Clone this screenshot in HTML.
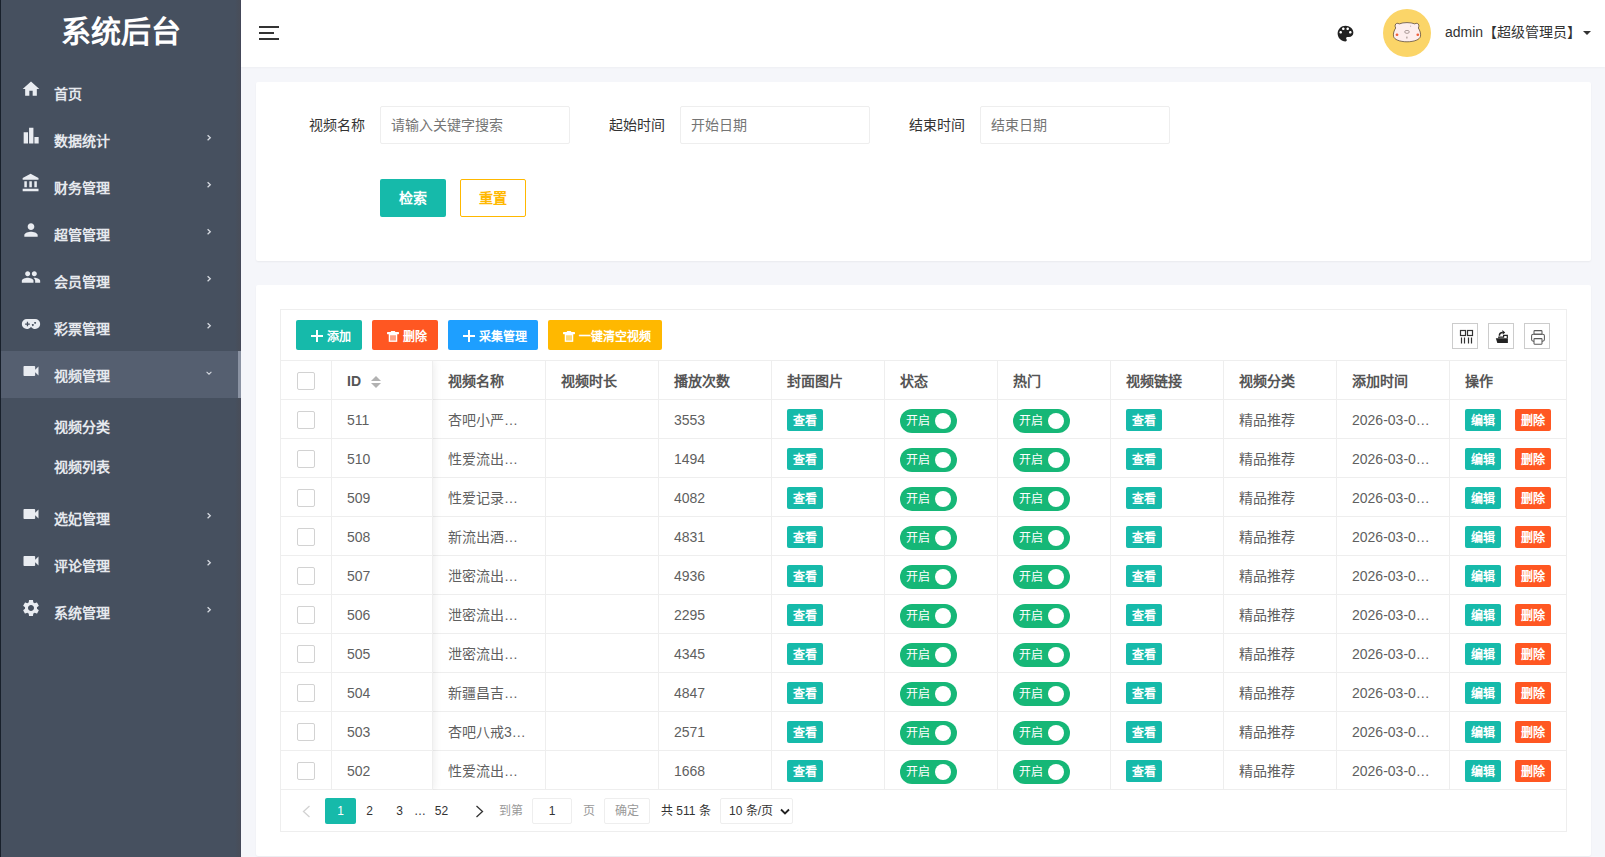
<!DOCTYPE html>
<html lang="zh-CN">
<head>
<meta charset="utf-8">
<title>系统后台</title>
<style>
*{box-sizing:border-box;margin:0;padding:0}
html,body{width:1605px;height:857px;overflow:hidden}
body{position:relative;background:#f5f6fa;font-family:"Liberation Sans",sans-serif;font-size:14px;color:#333;line-height:1}
ul{list-style:none}
svg{display:block}
.abs{position:absolute}

/* ---------- sidebar ---------- */
.side{position:absolute;left:0;top:0;width:241px;height:857px;background:#46505f linear-gradient(to right,#46505f 0,#46505f 234px,#474e5b 237px,#4a4e59 240px);border-left:1px solid #18202b;border-right:1px solid #45495a;color:#e6e9ee}
.logo{position:absolute;left:0;top:0;width:240px;height:67px;line-height:63px;text-align:center;font-size:30px;font-weight:bold;color:#fff;letter-spacing:0}
.nav{position:absolute;left:0;top:69px;width:240px}
.nav li.item{position:relative;height:47px;font-weight:bold;font-size:14px}
.nav li.item .ic{position:absolute;left:20px;top:10px;width:20px;height:20px;fill:#e9ecf1}
.nav li.item .tx{position:absolute;left:53px;top:0;line-height:50px;white-space:nowrap}
.nav li.item .ar{position:absolute;left:204px;top:17px;width:8px;height:10px;fill:none;stroke:#d5d9e0;stroke-width:1.3}
.nav li.on{background:#555f70}
.nav li.on:after{content:"";position:absolute;right:0;top:0;width:3px;height:47px;background:#8b93a3}
.nav .sub{padding:8px 0;height:96px}
.nav .sub li{height:40px;line-height:42px;padding-left:53px;font-weight:bold;font-size:14px;white-space:nowrap}

/* ---------- header ---------- */
.header{position:absolute;left:241px;top:0;width:1364px;height:67px;background:#fff;box-shadow:0 1px 2px rgba(0,0,0,.03)}
.burger i{position:absolute;left:18px;height:2px;background:#333;display:block}
.uname{position:absolute;left:1204px;top:0;line-height:65px;font-size:14px;color:#333;white-space:nowrap}
.caret{position:absolute;left:1342px;top:31px;width:0;height:0;border-left:4px solid transparent;border-right:4px solid transparent;border-top:4.5px solid #333}
.avatar{position:absolute;left:1142px;top:9px;width:48px;height:48px;border-radius:50%;background:#fbd568;overflow:hidden}

/* ---------- cards ---------- */
.card{position:absolute;left:256px;width:1335px;background:#fff;border-radius:2px;box-shadow:0 1px 2px 0 rgba(0,0,0,.05)}

/* ---------- search form ---------- */
.search{top:82px;height:179px}
.search label{position:absolute;top:24px;height:38px;line-height:38px;width:80px;text-align:right;font-size:14px;color:#333;white-space:nowrap}
.search .inp{position:absolute;top:24px;width:190px;height:38px;border:1px solid #eee;border-radius:2px;background:#fff;line-height:36px;padding:0 0 0 10px;font-size:14px;color:#333;font-family:"Liberation Sans",sans-serif;outline:none;display:block}
.search .inp::placeholder{color:#757575;opacity:1}
.btn{position:absolute;display:block;border:none;padding:0;margin:0;border-radius:2px;color:#fff;text-align:center;font-weight:bold;white-space:nowrap;font-family:"Liberation Sans",sans-serif}
.search .btn{top:97px;width:66px;height:38px;line-height:39px;font-size:14px}
.bg-pri{background:#16baaa}
.bg-red{background:#ff5722}
.bg-blue{background:#1e9fff}
.bg-warm{background:#ffb800}

/* ---------- table card ---------- */
.tcard{top:285px;height:571px}
.tbox{position:absolute;left:24px;top:24px;width:1287px;height:523px;border:1px solid #eee;background:#fff}
.tool{position:absolute;left:0;top:0;width:1285px;height:51px;border-bottom:1px solid #eee}
.tool .btn{top:10px;height:30px;line-height:34px;font-size:12px;text-align:left}
.tool .btn svg{position:absolute;top:10px}
.tool .btn span{position:absolute;top:0}
.tico{position:absolute;top:13px;width:26px;height:26px;border:1px solid #ccc;background:#fff}
.tico svg{position:absolute;left:0;top:0}
table.grid{position:absolute;left:0;top:51px;border-collapse:separate;border-spacing:0;table-layout:fixed;width:1285px;color:#5f5f5f;font-size:14px}
table.grid th,table.grid td{height:39px;border-right:1px solid #eee;border-bottom:1px solid #eee;padding:2px 15px 0;text-align:left;white-space:nowrap;overflow:hidden;vertical-align:middle;line-height:36px}
table.grid th{font-weight:bold;color:#555}
table.grid th:last-child,table.grid td:last-child{border-right:none}
table.grid .ck{padding:0}
.cb{display:block;width:18px;height:18px;border:1px solid #d2d2d2;border-radius:2px;background:#fff;margin:0 0 0 16px;position:relative;top:1px}
.xs{display:inline-block;vertical-align:middle;width:36px;height:22px;line-height:25px;overflow:hidden;border-radius:2px;color:#fff;font-size:12px;font-weight:bold;text-align:center;position:relative;top:-1px}
.sw{display:inline-block;vertical-align:middle;position:relative;top:0;width:57px;height:24px;border-radius:12px;background:#16b777;color:#fff;font-size:12px;line-height:24px;padding-left:6px}
.sw i{position:absolute;left:35px;top:4px;width:16px;height:16px;border-radius:50%;background:#fff}
.clip{position:absolute;left:0;top:51px;width:1285px;height:429px;overflow:hidden;pointer-events:none}
.fixl{position:absolute;left:0;top:0;width:152px;height:429px;box-shadow:1px 0 8px rgba(0,0,0,.08);pointer-events:none}
.fixr{position:absolute;left:1169px;top:0;width:116px;height:429px;box-shadow:none;pointer-events:none}
.sort{display:inline-block;position:relative;width:10px;height:14px;margin-left:10px;vertical-align:middle;top:0}
.sort:before,.sort:after{content:"";position:absolute;left:0;border-left:5px solid transparent;border-right:5px solid transparent}
.sort:before{top:1px;border-bottom:5px solid #b2b2b2}
.sort:after{top:8px;border-top:5px solid #b2b2b2}
/* pagination */
.page{position:absolute;left:0;top:480px;width:1285px;height:41px;font-size:12px;color:#333}
.page>*{position:absolute;top:8px;height:26px;line-height:26px;white-space:nowrap}
.page .cur{background:#16baaa;color:#fff;border-radius:2px;width:31px;text-align:center}
.page .num{text-align:center;width:31px}
.page .bx{border:1px solid #eee;border-radius:2px;background:#fff;line-height:24px;text-align:center}
</style>
</head>
<body>

<!-- ================= SIDEBAR ================= -->
<div class="side">
  <div class="logo">系统后台</div>
  <ul class="nav">
    <li class="item">
      <svg class="ic" viewBox="0 0 24 24"><path d="M10 20v-6h4v6h5v-8h3L12 3 2 12h3v8z"/></svg>
      <span class="tx">首页</span>
    </li>
    <li class="item">
      <svg class="ic" viewBox="0 0 24 24"><path d="M3.2 7.6h5.2V21H3.2zM9.7 2.2h5.2V21H9.7zM16.1 13.1h5.1V21h-5.1z"/></svg>
      <span class="tx">数据统计</span>
      <svg class="ar" viewBox="0 0 8 10"><path d="M2.6 2.3 5.3 4.800 2.6 7.300"/></svg>
    </li>
    <li class="item">
      <svg class="ic" viewBox="0 0 24 24"><path d="M4 10v7h3v-7H4zm6 0v7h3v-7h-3zM2 22h19v-3H2v3zm14-12v7h3v-7h-3zm-4.500-9L2 6v2h19V6l-9.500-5z"/></svg>
      <span class="tx">财务管理</span>
      <svg class="ar" viewBox="0 0 8 10"><path d="M2.6 2.3 5.3 4.800 2.6 7.300"/></svg>
    </li>
    <li class="item">
      <svg class="ic" viewBox="0 0 24 24"><path d="M12 12c2.210 0 4-1.790 4-4s-1.790-4-4-4-4 1.790-4 4 1.790 4 4 4zm0 2c-2.670 0-8 1.340-8 4v2h16v-2c0-2.660-5.330-4-8-4z"/></svg>
      <span class="tx">超管管理</span>
      <svg class="ar" viewBox="0 0 8 10"><path d="M2.6 2.3 5.3 4.800 2.6 7.300"/></svg>
    </li>
    <li class="item">
      <svg class="ic" viewBox="0 0 24 24"><path d="M16 11c1.660 0 2.990-1.340 2.990-3S17.660 5 16 5c-1.660 0-3 1.340-3 3s1.340 3 3 3zm-8 0c1.660 0 2.990-1.340 2.990-3S9.660 5 8 5C6.340 5 5 6.340 5 8s1.340 3 3 3zm0 2c-2.330 0-7 1.170-7 3.500V19h14v-2.500c0-2.330-4.670-3.500-7-3.500zm8 0c-.290 0-.620.020-.970.050 1.160.840 1.970 1.970 1.970 3.450V19h6v-2.500c0-2.330-4.670-3.500-7-3.500z"/></svg>
      <span class="tx">会员管理</span>
      <svg class="ar" viewBox="0 0 8 10"><path d="M2.6 2.3 5.3 4.800 2.6 7.300"/></svg>
    </li>
    <li class="item">
      <svg class="ic" viewBox="0 0 24 24"><path fill-rule="evenodd" d="M7 6h10a6 6 0 0 1 0 12c-1.900 0-3.500-.850-4.600-2.200L12 15.300l-.4.500C10.500 17.150 8.900 18 7 18A6 6 0 0 1 7 6zm0 3.200v2.050H4.950v1.500H7v2.050h1.500v-2.050h2.050v-1.500H8.500V9.200H7zm9.900.300a1.150 1.150 0 1 0 .01 0zm-2.700 2.600a1.150 1.150 0 1 0 .01 0z"/></svg>
      <span class="tx">彩票管理</span>
      <svg class="ar" viewBox="0 0 8 10"><path d="M2.6 2.3 5.3 4.800 2.6 7.300"/></svg>
    </li>
    <li class="item on">
      <svg class="ic" viewBox="0 0 24 24"><path d="M17 10.500V7c0-.550-.450-1-1-1H4c-.550 0-1 .450-1 1v10c0 .550.450 1 1 1h12c.550 0 1-.450 1-1v-3.500l4 4v-11l-4 4z"/></svg>
      <span class="tx">视频管理</span>
      <svg class="ar" viewBox="0 0 8 10" style="left:203px;top:18px;width:10px;height:8px"><path d="M2 3.500 5 6.500 8 3.500" transform="translate(-1 0)"/></svg>
    </li>
    <li class="sub">
      <ul>
        <li>视频分类</li>
        <li>视频列表</li>
      </ul>
    </li>
    <li class="item">
      <svg class="ic" viewBox="0 0 24 24"><path d="M17 10.500V7c0-.550-.450-1-1-1H4c-.550 0-1 .450-1 1v10c0 .550.450 1 1 1h12c.550 0 1-.450 1-1v-3.500l4 4v-11l-4 4z"/></svg>
      <span class="tx">选妃管理</span>
      <svg class="ar" viewBox="0 0 8 10"><path d="M2.6 2.3 5.3 4.800 2.6 7.300"/></svg>
    </li>
    <li class="item">
      <svg class="ic" viewBox="0 0 24 24"><path d="M17 10.500V7c0-.550-.450-1-1-1H4c-.550 0-1 .450-1 1v10c0 .550.450 1 1 1h12c.550 0 1-.450 1-1v-3.500l4 4v-11l-4 4z"/></svg>
      <span class="tx">评论管理</span>
      <svg class="ar" viewBox="0 0 8 10"><path d="M2.6 2.3 5.3 4.800 2.6 7.300"/></svg>
    </li>
    <li class="item">
      <svg class="ic" viewBox="0 0 24 24"><path d="M19.140 12.940c.040-.300.060-.610.060-.940 0-.320-.020-.640-.070-.940l2.030-1.580c.180-.140.230-.410.120-.610l-1.920-3.320c-.120-.220-.370-.290-.590-.220l-2.390.960c-.500-.380-1.030-.700-1.620-.940l-.360-2.540c-.040-.240-.240-.410-.480-.410h-3.840c-.240 0-.430.170-.470.410l-.360 2.540c-.590.240-1.130.570-1.620.940l-2.390-.960c-.220-.080-.470 0-.590.220L2.740 8.870c-.120.210-.080.470.120.610l2.030 1.580c-.050.300-.090.630-.090.940s.020.640.070.940l-2.030 1.580c-.180.140-.230.410-.120.610l1.920 3.320c.120.220.370.290.590.220l2.390-.960c.500.380 1.030.700 1.620.940l.360 2.540c.050.240.240.410.480.410h3.840c.240 0 .440-.170.470-.410l.360-2.540c.590-.240 1.130-.560 1.620-.940l2.390.960c.220.080.470 0 .590-.220l1.920-3.320c.120-.220.070-.470-.120-.610l-2.010-1.580zM12 15.600c-1.980 0-3.600-1.620-3.600-3.600s1.620-3.600 3.600-3.600 3.600 1.620 3.600 3.600-1.620 3.600-3.600 3.600z"/></svg>
      <span class="tx">系统管理</span>
      <svg class="ar" viewBox="0 0 8 10"><path d="M2.6 2.3 5.3 4.800 2.6 7.300"/></svg>
    </li>
  </ul>
</div>

<!-- ================= HEADER ================= -->
<div class="header">
  <div class="burger">
    <i style="top:26px;width:20px"></i>
    <i style="top:32px;width:15px"></i>
    <i style="top:38px;width:20px"></i>
  </div>
  <svg class="abs" style="left:1093.700px;top:22.500px;width:21px;height:21px" viewBox="0 0 24 24"><path fill="#222" d="M12 3c-4.970 0-9 4.030-9 9s4.030 9 9 9c.830 0 1.500-.670 1.500-1.500 0-.390-.150-.740-.390-1.010-.230-.260-.380-.610-.380-.990 0-.830.670-1.500 1.500-1.500H16c2.760 0 5-2.240 5-5 0-4.420-4.030-8-9-8zm-5.500 9c-.830 0-1.500-.670-1.500-1.500S5.670 9 6.500 9 8 9.670 8 10.500 7.330 12 6.500 12zm3-4C8.670 8 8 7.330 8 6.500S8.670 5 9.500 5s1.500.670 1.500 1.500S10.330 8 9.500 8zm5 0c-.830 0-1.500-.670-1.500-1.500S13.670 5 14.500 5s1.500.670 1.500 1.500S15.330 8 14.500 8zm3 4c-.830 0-1.500-.670-1.500-1.500S16.670 9 17.500 9s1.500.670 1.500 1.500-.670 1.500-1.500 1.500z"/></svg>
  <div class="avatar">
    <svg viewBox="0 0 48 48" width="48" height="48">
      <path d="M12.200 16.200c.300-1.900 2.400-2.500 4-1.300 2.200-.900 5-1.300 7.800-1.300s5.600.400 7.800 1.300c1.600-1.200 3.700-.600 4 1.300.200 1.200-.100 2.100-.500 2.800 1.700 2.400 2.600 5.600 2.200 8.200-.500 3.300-6.300 5.600-13.500 5.600S11 30.500 10.500 27.200c-.400-2.600.500-5.800 2.200-8.200-.400-.700-.700-1.600-.500-2.800z" fill="#fdeeee" stroke="#4a3a2a" stroke-width=".7"/>
      <ellipse cx="14" cy="25.800" rx="1.400" ry="1.300" fill="#f2603c"/>
      <ellipse cx="34.800" cy="25.800" rx="1.400" ry="1.300" fill="#f2603c"/>
      <ellipse cx="24" cy="22.900" rx="2.300" ry="1.500" fill="none" stroke="#7a6a66" stroke-width=".6"/>
      <path d="M23.900 27.600v1.900" stroke="#6a5a55" stroke-width=".7" fill="none"/>
      <path d="M27.600 16.600v1.200" stroke="#8a7a75" stroke-width=".5" fill="none"/>
    </svg>
  </div>
  <div class="uname">admin【超级管理员】</div>
  <div class="caret"></div>
</div>

<!-- ================= SEARCH CARD ================= -->
<div class="card search">
  <label style="left:29px">视频名称</label>
  <input class="inp" type="text" style="left:124px" placeholder="请输入关键字搜索">
  <label style="left:329px">起始时间</label>
  <input class="inp" type="text" style="left:424px" placeholder="开始日期">
  <label style="left:629px">结束时间</label>
  <input class="inp" type="text" style="left:724px" placeholder="结束日期">
  <button type="button" class="btn bg-pri" style="left:124px">检索</button>
  <button type="button" class="btn" style="left:204px;background:#fff;border:1px solid #ffb800;color:#ffb800;line-height:37px">重置</button>
</div>


<!-- ================= TABLE CARD ================= -->
<div class="card tcard">
 <div class="tbox">
  <div class="tool">
    <div class="btn bg-pri" style="left:15px;width:66px"><svg style="left:15px" width="12" height="12" viewBox="0 0 12 12"><path d="M5 0h2v5h5v2H7v5H5V7H0V5h5z" fill="#fff"/></svg><span style="left:31px">添加</span></div>
    <div class="btn bg-red" style="left:91px;width:66px"><svg style="left:15px;top:10.5px" width="12" height="11" viewBox="0 0 12 11"><rect x="0" y="1" width="12" height="2.2" rx=".6" fill="#fff"/><rect x="3.800" y="0" width="4.400" height="1.500" rx=".5" fill="#fff"/><rect x="2.400" y="3.600" width="7.200" height="6.600" fill="rgba(255,255,255,.45)" stroke="#fff" stroke-width="1.300"/></svg><span style="left:31px">删除</span></div>
    <div class="btn bg-blue" style="left:167px;width:90px"><svg style="left:15px" width="12" height="12" viewBox="0 0 12 12"><path d="M5 0h2v5h5v2H7v5H5V7H0V5h5z" fill="#fff"/></svg><span style="left:31px">采集管理</span></div>
    <div class="btn bg-warm" style="left:267px;width:114px"><svg style="left:15px;top:10.5px" width="12" height="11" viewBox="0 0 12 11"><rect x="0" y="1" width="12" height="2.2" rx=".6" fill="#fff"/><rect x="3.800" y="0" width="4.400" height="1.500" rx=".5" fill="#fff"/><rect x="2.400" y="3.600" width="7.200" height="6.600" fill="rgba(255,255,255,.45)" stroke="#fff" stroke-width="1.300"/></svg><span style="left:31px">一键清空视频</span></div>

    <div class="tico" style="left:1171px">
      <svg width="24" height="24" viewBox="0 0 24 24"><g fill="none" stroke="#333" stroke-width="1.200"><rect x="7.500" y="6.500" width="5" height="5"/><rect x="14.500" y="6.500" width="5" height="5"/><path d="M8.500 13.500v6M11.500 13.500v6M15.500 13.500v6M18.500 13.500v6"/></g></svg>
    </div>
    <div class="tico" style="left:1207px">
      <svg width="24" height="24" viewBox="0 0 24 24"><path d="M6.800 14.300H18.900V18.900H8.300z" fill="#222"/><path d="M9.800 14.300V13.200h4.800V11.400h3.700V14.300" fill="none" stroke="#222" stroke-width="1.200"/><path d="M10.400 11.800c-.1-2 1.100-3.300 3.400-3.400" fill="none" stroke="#222" stroke-width="1.500"/><path d="M13.300 6.100 16.200 8.500 13.800 10.600z" fill="#222"/></svg>
    </div>
    <div class="tico" style="left:1243px">
      <svg width="24" height="24" viewBox="0 0 24 24"><g fill="none" stroke="#5a5a5a" stroke-width="1.050"><rect x="9" y="6.600" width="8" height="3.600" rx=".8"/><rect x="6.600" y="10.200" width="12.800" height="7" rx="1.600"/><rect x="9" y="14.600" width="8" height="5.600" rx=".6" fill="#fff"/></g></svg>
    </div>
  </div>

  <table class="grid">
    <colgroup><col style="width:51px"><col style="width:101px"><col style="width:113px"><col style="width:113px"><col style="width:113px"><col style="width:113px"><col style="width:113px"><col style="width:113px"><col style="width:113px"><col style="width:113px"><col style="width:113px"><col style="width:116px"></colgroup>
    <thead>
      <tr><th class="ck"><i class="cb"></i></th><th>ID<i class="sort"></i></th><th>视频名称</th><th>视频时长</th><th>播放次数</th><th>封面图片</th><th>状态</th><th>热门</th><th>视频链接</th><th>视频分类</th><th>添加时间</th><th>操作</th></tr>
    </thead>
    <tbody>
      <tr><td class="ck"><i class="cb"></i></td><td>511</td><td>杏吧小严…</td><td></td><td>3553</td><td><span class="xs bg-pri">查看</span></td><td><span class="sw">开启<i></i></span></td><td><span class="sw">开启<i></i></span></td><td><span class="xs bg-pri">查看</span></td><td>精品推荐</td><td>2026-03-0…</td><td><span class="xs bg-pri">编辑</span><span class="xs bg-red" style="margin-left:14px">删除</span></td></tr>
      <tr><td class="ck"><i class="cb"></i></td><td>510</td><td>性爱流出…</td><td></td><td>1494</td><td><span class="xs bg-pri">查看</span></td><td><span class="sw">开启<i></i></span></td><td><span class="sw">开启<i></i></span></td><td><span class="xs bg-pri">查看</span></td><td>精品推荐</td><td>2026-03-0…</td><td><span class="xs bg-pri">编辑</span><span class="xs bg-red" style="margin-left:14px">删除</span></td></tr>
      <tr><td class="ck"><i class="cb"></i></td><td>509</td><td>性爱记录…</td><td></td><td>4082</td><td><span class="xs bg-pri">查看</span></td><td><span class="sw">开启<i></i></span></td><td><span class="sw">开启<i></i></span></td><td><span class="xs bg-pri">查看</span></td><td>精品推荐</td><td>2026-03-0…</td><td><span class="xs bg-pri">编辑</span><span class="xs bg-red" style="margin-left:14px">删除</span></td></tr>
      <tr><td class="ck"><i class="cb"></i></td><td>508</td><td>新流出酒…</td><td></td><td>4831</td><td><span class="xs bg-pri">查看</span></td><td><span class="sw">开启<i></i></span></td><td><span class="sw">开启<i></i></span></td><td><span class="xs bg-pri">查看</span></td><td>精品推荐</td><td>2026-03-0…</td><td><span class="xs bg-pri">编辑</span><span class="xs bg-red" style="margin-left:14px">删除</span></td></tr>
      <tr><td class="ck"><i class="cb"></i></td><td>507</td><td>泄密流出…</td><td></td><td>4936</td><td><span class="xs bg-pri">查看</span></td><td><span class="sw">开启<i></i></span></td><td><span class="sw">开启<i></i></span></td><td><span class="xs bg-pri">查看</span></td><td>精品推荐</td><td>2026-03-0…</td><td><span class="xs bg-pri">编辑</span><span class="xs bg-red" style="margin-left:14px">删除</span></td></tr>
      <tr><td class="ck"><i class="cb"></i></td><td>506</td><td>泄密流出…</td><td></td><td>2295</td><td><span class="xs bg-pri">查看</span></td><td><span class="sw">开启<i></i></span></td><td><span class="sw">开启<i></i></span></td><td><span class="xs bg-pri">查看</span></td><td>精品推荐</td><td>2026-03-0…</td><td><span class="xs bg-pri">编辑</span><span class="xs bg-red" style="margin-left:14px">删除</span></td></tr>
      <tr><td class="ck"><i class="cb"></i></td><td>505</td><td>泄密流出…</td><td></td><td>4345</td><td><span class="xs bg-pri">查看</span></td><td><span class="sw">开启<i></i></span></td><td><span class="sw">开启<i></i></span></td><td><span class="xs bg-pri">查看</span></td><td>精品推荐</td><td>2026-03-0…</td><td><span class="xs bg-pri">编辑</span><span class="xs bg-red" style="margin-left:14px">删除</span></td></tr>
      <tr><td class="ck"><i class="cb"></i></td><td>504</td><td>新疆昌吉…</td><td></td><td>4847</td><td><span class="xs bg-pri">查看</span></td><td><span class="sw">开启<i></i></span></td><td><span class="sw">开启<i></i></span></td><td><span class="xs bg-pri">查看</span></td><td>精品推荐</td><td>2026-03-0…</td><td><span class="xs bg-pri">编辑</span><span class="xs bg-red" style="margin-left:14px">删除</span></td></tr>
      <tr><td class="ck"><i class="cb"></i></td><td>503</td><td>杏吧八戒3…</td><td></td><td>2571</td><td><span class="xs bg-pri">查看</span></td><td><span class="sw">开启<i></i></span></td><td><span class="sw">开启<i></i></span></td><td><span class="xs bg-pri">查看</span></td><td>精品推荐</td><td>2026-03-0…</td><td><span class="xs bg-pri">编辑</span><span class="xs bg-red" style="margin-left:14px">删除</span></td></tr>
      <tr><td class="ck"><i class="cb"></i></td><td>502</td><td>性爱流出…</td><td></td><td>1668</td><td><span class="xs bg-pri">查看</span></td><td><span class="sw">开启<i></i></span></td><td><span class="sw">开启<i></i></span></td><td><span class="xs bg-pri">查看</span></td><td>精品推荐</td><td>2026-03-0…</td><td><span class="xs bg-pri">编辑</span><span class="xs bg-red" style="margin-left:14px">删除</span></td></tr>
    </tbody>
  </table>
  <div class="clip"><div class="fixl"></div><div class="fixr"></div></div>

  <div class="page">
    <svg style="left:21px;top:15px;width:9px;height:13px" viewBox="0 0 9 13"><path d="M7.500 1 1.500 6.500l6 5.500" fill="none" stroke="#d2d2d2" stroke-width="1.300"/></svg>
    <span class="cur" style="left:44px">1</span>
    <span class="num" style="left:73px">2</span>
    <span class="num" style="left:103px">3</span>
    <span style="left:133px">…</span>
    <span class="num" style="left:145px">52</span>
    <svg style="left:194px;top:15px;width:9px;height:13px" viewBox="0 0 9 13"><path d="M1.500 1l6 5.500-6 5.500" fill="none" stroke="#333" stroke-width="1.300"/></svg>
    <span style="left:218px;color:#999">到第</span>
    <span class="bx" style="left:251px;width:40px">1</span>
    <span style="left:302px;color:#999">页</span>
    <span class="bx" style="left:323px;width:46px;color:#999">确定</span>
    <span style="left:380px">共 511 条</span>
    <span class="bx" style="left:439px;width:73px;text-align:left;padding-left:8px">10 条/页<svg style="position:absolute;left:59px;top:9px;width:10px;height:8px" viewBox="0 0 10 8"><path d="M1 1.500 5 5.500 9 1.500" fill="none" stroke="#222" stroke-width="1.800"/></svg></span>
  </div>
 </div>
</div>


</body>
</html>
